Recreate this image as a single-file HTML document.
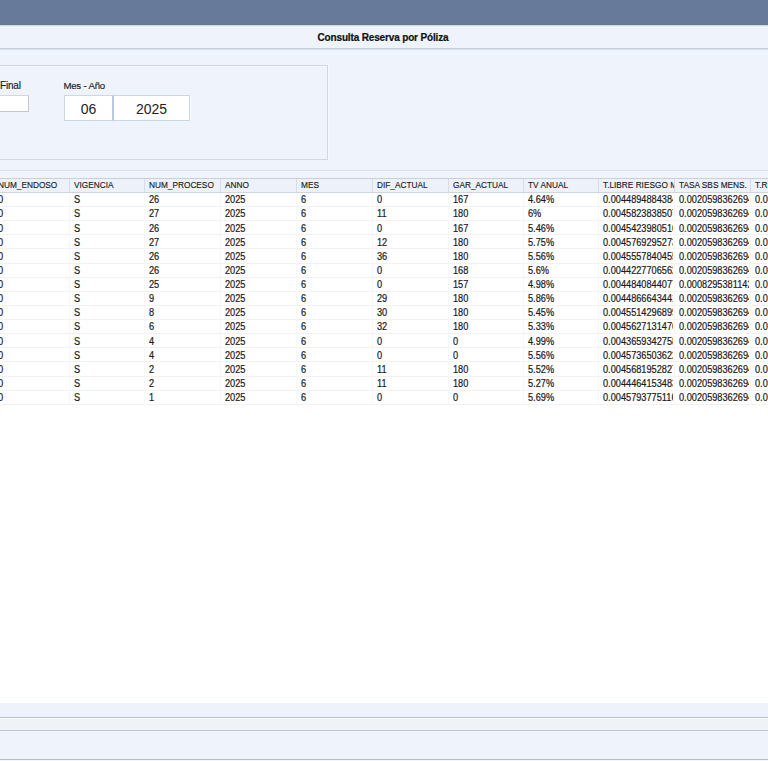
<!DOCTYPE html>
<html><head><meta charset="utf-8">
<style>
*{margin:0;padding:0;box-sizing:border-box}
html,body{width:768px;height:761px;overflow:hidden;background:#eff3fb;font-family:"Liberation Sans",sans-serif;color:#222;position:relative}
.abs{position:absolute}
#topbar{left:0;top:0;width:768px;height:25px;background:#687a99;border-bottom:1px solid #66778f}
#tb2{left:0;top:25px;width:768px;height:1px;background:#cfd7e2}
#tb3{left:0;top:26px;width:768px;height:1px;background:#e9eff7}
#titleband{left:0;top:27px;width:768px;height:21px;background:#eff3fb;border-top:1px solid #f3f7fd}
#title{left:0;top:27px;width:766px;height:21px;line-height:21px;text-align:center;font-weight:bold;font-size:10px;letter-spacing:-0.15px;color:#111;-webkit-text-stroke:0.2px #111}
#l48{left:0;top:48px;width:768px;height:1px;background:#c8d0db;box-shadow:0 1px 0 #dbe1ea}
#l49{left:0;top:50px;width:768px;height:3px;background:#eef4fd}
#l53{left:0;top:53px;width:768px;height:1px;background:#f4f7fc}
#panel{left:-60px;top:65px;width:388px;height:95px;border:1px solid #d2d8e2;box-shadow:inset 1px 1px 0 #f7f9fd, 1px 0 0 #f5f8fd}
.lbl{font-size:10px;color:#1a1a1a;letter-spacing:-0.2px;-webkit-text-stroke:0.15px #1a1a1a}
.inp{background:#fff;border:1px solid #cbd7e3}
.inpg{background:#fff;border:1px solid #d3d6da;border-right-color:#c3c7cc;border-bottom-color:#c3c7cc}
.val{font-size:14px;color:#222;text-align:center}
#l170{left:0;top:170px;width:768px;height:1px;background:#d9dfe7;box-shadow:0 1px 0 #f4f7fc}
#grid{left:0;top:178px;width:768px;height:227px;background:#fff}
.hdr{top:178px;height:15px;background:#edf2fa;border-top:1px solid #c9d0d9;border-bottom:1px solid #cfd5dd}
.hsep{width:1px;background:#d6dde8}
.htxt{font-size:9.3px;color:#1a1a1a;white-space:nowrap;overflow:hidden;transform-origin:0 0;transform:scaleX(0.89);-webkit-text-stroke:0.15px #1a1a1a}
.rsep{height:1px;background:#f3f1f2}
.csep{width:1px;background:#f7f7f8}
.cell{font-size:10px;color:#1a1a1a;white-space:nowrap;overflow:hidden;transform-origin:0 0;transform:scaleX(0.92);-webkit-text-stroke:0.2px #1a1a1a}
#white{left:0;top:405px;width:768px;height:298px;background:#fff}
#b1{left:0;top:703px;width:768px;height:14px;background:#eef2fb}
#b2{left:0;top:717px;width:768px;height:1px;background:#b9c0cb}
#b3{left:0;top:718px;width:768px;height:1px;background:#fbfcfe}
#b4{left:0;top:719px;width:768px;height:11px;background:#eff3f8}
#b5{left:0;top:730px;width:768px;height:1px;background:#c0c6cf}
#b6{left:0;top:731px;width:768px;height:28px;background:#eff3fb}
#b7{left:0;top:759px;width:768px;height:1px;background:#b3bac5}
#b8{left:0;top:760px;width:768px;height:1px;background:#f4f6fa}
</style></head><body>
<div id="topbar" class="abs"></div>
<div id="tb2" class="abs"></div>
<div id="tb3" class="abs"></div>
<div id="titleband" class="abs"></div>
<div id="title" class="abs">Consulta Reserva por Póliza</div>
<div id="l48" class="abs"></div>
<div id="l49" class="abs"></div>
<div id="l53" class="abs"></div>
<div id="panel" class="abs"></div>
<div class="abs lbl" style="left:0px;top:80px">Final</div>
<div class="abs inpg" style="left:-40px;top:95px;width:69px;height:17px"></div>
<div class="abs lbl" style="left:63.5px;top:79.5px;font-size:9.6px;letter-spacing:-0.3px;word-spacing:0.4px">Mes - Año</div>
<div class="abs inp val" style="left:64px;top:95px;width:49px;height:26px;line-height:26px;border-right-color:#b5cade">06</div>
<div class="abs inp val" style="left:113px;top:95px;width:77px;height:26px;line-height:26px;border-left-color:#b5cade;box-shadow:1px 0 0 #f8fbfe">2025</div>
<div id="l170" class="abs"></div>
<div id="grid" class="abs"></div>

<div class="abs hdr" style="left:0;width:768px"></div>
<div class="abs hsep" style="left:69px;top:179px;height:13px"></div>
<div class="abs htxt" style="left:-2.50px;top:180px;width:79.78px;height:11px;line-height:11px">NUM_ENDOSO</div>
<div class="abs hsep" style="left:144px;top:179px;height:13px"></div>
<div class="abs htxt" style="left:73.50px;top:180px;width:78.65px;height:11px;line-height:11px">VIGENCIA</div>
<div class="abs hsep" style="left:220px;top:179px;height:13px"></div>
<div class="abs htxt" style="left:148.50px;top:180px;width:79.78px;height:11px;line-height:11px">NUM_PROCESO</div>
<div class="abs hsep" style="left:296px;top:179px;height:13px"></div>
<div class="abs htxt" style="left:224.50px;top:180px;width:79.78px;height:11px;line-height:11px">ANNO</div>
<div class="abs hsep" style="left:372px;top:179px;height:13px"></div>
<div class="abs htxt" style="left:300.50px;top:180px;width:79.78px;height:11px;line-height:11px">MES</div>
<div class="abs hsep" style="left:448px;top:179px;height:13px"></div>
<div class="abs htxt" style="left:376.50px;top:180px;width:79.78px;height:11px;line-height:11px">DIF_ACTUAL</div>
<div class="abs hsep" style="left:523px;top:179px;height:13px"></div>
<div class="abs htxt" style="left:452.50px;top:180px;width:78.65px;height:11px;line-height:11px">GAR_ACTUAL</div>
<div class="abs hsep" style="left:598px;top:179px;height:13px"></div>
<div class="abs htxt" style="left:527.50px;top:180px;width:78.65px;height:11px;line-height:11px">TV ANUAL</div>
<div class="abs hsep" style="left:674px;top:179px;height:13px"></div>
<div class="abs htxt" style="left:602.50px;top:180px;width:79.78px;height:11px;line-height:11px">T.LIBRE RIESGO MENS.</div>
<div class="abs hsep" style="left:750px;top:179px;height:13px"></div>
<div class="abs htxt" style="left:678.50px;top:180px;width:79.78px;height:11px;line-height:11px">TASA SBS MENS.</div>
<div class="abs htxt" style="left:754.50px;top:180px;width:79.78px;height:11px;line-height:11px">T.RIESGO</div>
<div class="abs rsep" style="left:0;top:206.03px;width:768px"></div>
<div class="abs cell" style="left:-2.50px;top:194.30px;width:76.09px;height:12px;line-height:12px">0</div>
<div class="abs cell" style="left:73.50px;top:194.30px;width:75.00px;height:12px;line-height:12px">S</div>
<div class="abs cell" style="left:148.50px;top:194.30px;width:76.09px;height:12px;line-height:12px">26</div>
<div class="abs cell" style="left:224.50px;top:194.30px;width:76.09px;height:12px;line-height:12px">2025</div>
<div class="abs cell" style="left:300.50px;top:194.30px;width:76.09px;height:12px;line-height:12px">6</div>
<div class="abs cell" style="left:376.50px;top:194.30px;width:76.09px;height:12px;line-height:12px">0</div>
<div class="abs cell" style="left:452.50px;top:194.30px;width:75.00px;height:12px;line-height:12px">167</div>
<div class="abs cell" style="left:527.50px;top:194.30px;width:75.00px;height:12px;line-height:12px">4.64%</div>
<div class="abs cell" style="left:602.50px;top:194.30px;width:76.09px;height:12px;line-height:12px">0.0044894884384</div>
<div class="abs cell" style="left:678.50px;top:194.30px;width:76.09px;height:12px;line-height:12px">0.0020598362694</div>
<div class="abs cell" style="left:754.50px;top:194.30px;width:76.09px;height:12px;line-height:12px">0.01234</div>
<div class="abs rsep" style="left:0;top:220.16px;width:768px"></div>
<div class="abs cell" style="left:-2.50px;top:208.43px;width:76.09px;height:12px;line-height:12px">0</div>
<div class="abs cell" style="left:73.50px;top:208.43px;width:75.00px;height:12px;line-height:12px">S</div>
<div class="abs cell" style="left:148.50px;top:208.43px;width:76.09px;height:12px;line-height:12px">27</div>
<div class="abs cell" style="left:224.50px;top:208.43px;width:76.09px;height:12px;line-height:12px">2025</div>
<div class="abs cell" style="left:300.50px;top:208.43px;width:76.09px;height:12px;line-height:12px">6</div>
<div class="abs cell" style="left:376.50px;top:208.43px;width:76.09px;height:12px;line-height:12px">11</div>
<div class="abs cell" style="left:452.50px;top:208.43px;width:75.00px;height:12px;line-height:12px">180</div>
<div class="abs cell" style="left:527.50px;top:208.43px;width:75.00px;height:12px;line-height:12px">6%</div>
<div class="abs cell" style="left:602.50px;top:208.43px;width:76.09px;height:12px;line-height:12px">0.0045823838507</div>
<div class="abs cell" style="left:678.50px;top:208.43px;width:76.09px;height:12px;line-height:12px">0.0020598362694</div>
<div class="abs cell" style="left:754.50px;top:208.43px;width:76.09px;height:12px;line-height:12px">0.01234</div>
<div class="abs rsep" style="left:0;top:234.29px;width:768px"></div>
<div class="abs cell" style="left:-2.50px;top:222.56px;width:76.09px;height:12px;line-height:12px">0</div>
<div class="abs cell" style="left:73.50px;top:222.56px;width:75.00px;height:12px;line-height:12px">S</div>
<div class="abs cell" style="left:148.50px;top:222.56px;width:76.09px;height:12px;line-height:12px">26</div>
<div class="abs cell" style="left:224.50px;top:222.56px;width:76.09px;height:12px;line-height:12px">2025</div>
<div class="abs cell" style="left:300.50px;top:222.56px;width:76.09px;height:12px;line-height:12px">6</div>
<div class="abs cell" style="left:376.50px;top:222.56px;width:76.09px;height:12px;line-height:12px">0</div>
<div class="abs cell" style="left:452.50px;top:222.56px;width:75.00px;height:12px;line-height:12px">167</div>
<div class="abs cell" style="left:527.50px;top:222.56px;width:75.00px;height:12px;line-height:12px">5.46%</div>
<div class="abs cell" style="left:602.50px;top:222.56px;width:76.09px;height:12px;line-height:12px">0.0045423980516</div>
<div class="abs cell" style="left:678.50px;top:222.56px;width:76.09px;height:12px;line-height:12px">0.0020598362694</div>
<div class="abs cell" style="left:754.50px;top:222.56px;width:76.09px;height:12px;line-height:12px">0.01234</div>
<div class="abs rsep" style="left:0;top:248.42px;width:768px"></div>
<div class="abs cell" style="left:-2.50px;top:236.69px;width:76.09px;height:12px;line-height:12px">0</div>
<div class="abs cell" style="left:73.50px;top:236.69px;width:75.00px;height:12px;line-height:12px">S</div>
<div class="abs cell" style="left:148.50px;top:236.69px;width:76.09px;height:12px;line-height:12px">27</div>
<div class="abs cell" style="left:224.50px;top:236.69px;width:76.09px;height:12px;line-height:12px">2025</div>
<div class="abs cell" style="left:300.50px;top:236.69px;width:76.09px;height:12px;line-height:12px">6</div>
<div class="abs cell" style="left:376.50px;top:236.69px;width:76.09px;height:12px;line-height:12px">12</div>
<div class="abs cell" style="left:452.50px;top:236.69px;width:75.00px;height:12px;line-height:12px">180</div>
<div class="abs cell" style="left:527.50px;top:236.69px;width:75.00px;height:12px;line-height:12px">5.75%</div>
<div class="abs cell" style="left:602.50px;top:236.69px;width:76.09px;height:12px;line-height:12px">0.0045769295273</div>
<div class="abs cell" style="left:678.50px;top:236.69px;width:76.09px;height:12px;line-height:12px">0.0020598362694</div>
<div class="abs cell" style="left:754.50px;top:236.69px;width:76.09px;height:12px;line-height:12px">0.01234</div>
<div class="abs rsep" style="left:0;top:262.55px;width:768px"></div>
<div class="abs cell" style="left:-2.50px;top:250.82px;width:76.09px;height:12px;line-height:12px">0</div>
<div class="abs cell" style="left:73.50px;top:250.82px;width:75.00px;height:12px;line-height:12px">S</div>
<div class="abs cell" style="left:148.50px;top:250.82px;width:76.09px;height:12px;line-height:12px">26</div>
<div class="abs cell" style="left:224.50px;top:250.82px;width:76.09px;height:12px;line-height:12px">2025</div>
<div class="abs cell" style="left:300.50px;top:250.82px;width:76.09px;height:12px;line-height:12px">6</div>
<div class="abs cell" style="left:376.50px;top:250.82px;width:76.09px;height:12px;line-height:12px">36</div>
<div class="abs cell" style="left:452.50px;top:250.82px;width:75.00px;height:12px;line-height:12px">180</div>
<div class="abs cell" style="left:527.50px;top:250.82px;width:75.00px;height:12px;line-height:12px">5.56%</div>
<div class="abs cell" style="left:602.50px;top:250.82px;width:76.09px;height:12px;line-height:12px">0.0045557840455</div>
<div class="abs cell" style="left:678.50px;top:250.82px;width:76.09px;height:12px;line-height:12px">0.0020598362694</div>
<div class="abs cell" style="left:754.50px;top:250.82px;width:76.09px;height:12px;line-height:12px">0.01234</div>
<div class="abs rsep" style="left:0;top:276.68px;width:768px"></div>
<div class="abs cell" style="left:-2.50px;top:264.95px;width:76.09px;height:12px;line-height:12px">0</div>
<div class="abs cell" style="left:73.50px;top:264.95px;width:75.00px;height:12px;line-height:12px">S</div>
<div class="abs cell" style="left:148.50px;top:264.95px;width:76.09px;height:12px;line-height:12px">26</div>
<div class="abs cell" style="left:224.50px;top:264.95px;width:76.09px;height:12px;line-height:12px">2025</div>
<div class="abs cell" style="left:300.50px;top:264.95px;width:76.09px;height:12px;line-height:12px">6</div>
<div class="abs cell" style="left:376.50px;top:264.95px;width:76.09px;height:12px;line-height:12px">0</div>
<div class="abs cell" style="left:452.50px;top:264.95px;width:75.00px;height:12px;line-height:12px">168</div>
<div class="abs cell" style="left:527.50px;top:264.95px;width:75.00px;height:12px;line-height:12px">5.6%</div>
<div class="abs cell" style="left:602.50px;top:264.95px;width:76.09px;height:12px;line-height:12px">0.0044227706562</div>
<div class="abs cell" style="left:678.50px;top:264.95px;width:76.09px;height:12px;line-height:12px">0.0020598362694</div>
<div class="abs cell" style="left:754.50px;top:264.95px;width:76.09px;height:12px;line-height:12px">0.01234</div>
<div class="abs rsep" style="left:0;top:290.81px;width:768px"></div>
<div class="abs cell" style="left:-2.50px;top:279.08px;width:76.09px;height:12px;line-height:12px">0</div>
<div class="abs cell" style="left:73.50px;top:279.08px;width:75.00px;height:12px;line-height:12px">S</div>
<div class="abs cell" style="left:148.50px;top:279.08px;width:76.09px;height:12px;line-height:12px">25</div>
<div class="abs cell" style="left:224.50px;top:279.08px;width:76.09px;height:12px;line-height:12px">2025</div>
<div class="abs cell" style="left:300.50px;top:279.08px;width:76.09px;height:12px;line-height:12px">6</div>
<div class="abs cell" style="left:376.50px;top:279.08px;width:76.09px;height:12px;line-height:12px">0</div>
<div class="abs cell" style="left:452.50px;top:279.08px;width:75.00px;height:12px;line-height:12px">157</div>
<div class="abs cell" style="left:527.50px;top:279.08px;width:75.00px;height:12px;line-height:12px">4.98%</div>
<div class="abs cell" style="left:602.50px;top:279.08px;width:76.09px;height:12px;line-height:12px">0.0044840844077</div>
<div class="abs cell" style="left:678.50px;top:279.08px;width:76.09px;height:12px;line-height:12px">0.0008295381142</div>
<div class="abs cell" style="left:754.50px;top:279.08px;width:76.09px;height:12px;line-height:12px">0.01234</div>
<div class="abs rsep" style="left:0;top:304.94px;width:768px"></div>
<div class="abs cell" style="left:-2.50px;top:293.21px;width:76.09px;height:12px;line-height:12px">0</div>
<div class="abs cell" style="left:73.50px;top:293.21px;width:75.00px;height:12px;line-height:12px">S</div>
<div class="abs cell" style="left:148.50px;top:293.21px;width:76.09px;height:12px;line-height:12px">9</div>
<div class="abs cell" style="left:224.50px;top:293.21px;width:76.09px;height:12px;line-height:12px">2025</div>
<div class="abs cell" style="left:300.50px;top:293.21px;width:76.09px;height:12px;line-height:12px">6</div>
<div class="abs cell" style="left:376.50px;top:293.21px;width:76.09px;height:12px;line-height:12px">29</div>
<div class="abs cell" style="left:452.50px;top:293.21px;width:75.00px;height:12px;line-height:12px">180</div>
<div class="abs cell" style="left:527.50px;top:293.21px;width:75.00px;height:12px;line-height:12px">5.86%</div>
<div class="abs cell" style="left:602.50px;top:293.21px;width:76.09px;height:12px;line-height:12px">0.0044866643441</div>
<div class="abs cell" style="left:678.50px;top:293.21px;width:76.09px;height:12px;line-height:12px">0.0020598362694</div>
<div class="abs cell" style="left:754.50px;top:293.21px;width:76.09px;height:12px;line-height:12px">0.01234</div>
<div class="abs rsep" style="left:0;top:319.07px;width:768px"></div>
<div class="abs cell" style="left:-2.50px;top:307.34px;width:76.09px;height:12px;line-height:12px">0</div>
<div class="abs cell" style="left:73.50px;top:307.34px;width:75.00px;height:12px;line-height:12px">S</div>
<div class="abs cell" style="left:148.50px;top:307.34px;width:76.09px;height:12px;line-height:12px">8</div>
<div class="abs cell" style="left:224.50px;top:307.34px;width:76.09px;height:12px;line-height:12px">2025</div>
<div class="abs cell" style="left:300.50px;top:307.34px;width:76.09px;height:12px;line-height:12px">6</div>
<div class="abs cell" style="left:376.50px;top:307.34px;width:76.09px;height:12px;line-height:12px">30</div>
<div class="abs cell" style="left:452.50px;top:307.34px;width:75.00px;height:12px;line-height:12px">180</div>
<div class="abs cell" style="left:527.50px;top:307.34px;width:75.00px;height:12px;line-height:12px">5.45%</div>
<div class="abs cell" style="left:602.50px;top:307.34px;width:76.09px;height:12px;line-height:12px">0.0045514296899</div>
<div class="abs cell" style="left:678.50px;top:307.34px;width:76.09px;height:12px;line-height:12px">0.0020598362694</div>
<div class="abs cell" style="left:754.50px;top:307.34px;width:76.09px;height:12px;line-height:12px">0.01234</div>
<div class="abs rsep" style="left:0;top:333.20px;width:768px"></div>
<div class="abs cell" style="left:-2.50px;top:321.47px;width:76.09px;height:12px;line-height:12px">0</div>
<div class="abs cell" style="left:73.50px;top:321.47px;width:75.00px;height:12px;line-height:12px">S</div>
<div class="abs cell" style="left:148.50px;top:321.47px;width:76.09px;height:12px;line-height:12px">6</div>
<div class="abs cell" style="left:224.50px;top:321.47px;width:76.09px;height:12px;line-height:12px">2025</div>
<div class="abs cell" style="left:300.50px;top:321.47px;width:76.09px;height:12px;line-height:12px">6</div>
<div class="abs cell" style="left:376.50px;top:321.47px;width:76.09px;height:12px;line-height:12px">32</div>
<div class="abs cell" style="left:452.50px;top:321.47px;width:75.00px;height:12px;line-height:12px">180</div>
<div class="abs cell" style="left:527.50px;top:321.47px;width:75.00px;height:12px;line-height:12px">5.33%</div>
<div class="abs cell" style="left:602.50px;top:321.47px;width:76.09px;height:12px;line-height:12px">0.0045627131476</div>
<div class="abs cell" style="left:678.50px;top:321.47px;width:76.09px;height:12px;line-height:12px">0.0020598362694</div>
<div class="abs cell" style="left:754.50px;top:321.47px;width:76.09px;height:12px;line-height:12px">0.01234</div>
<div class="abs rsep" style="left:0;top:347.33px;width:768px"></div>
<div class="abs cell" style="left:-2.50px;top:335.60px;width:76.09px;height:12px;line-height:12px">0</div>
<div class="abs cell" style="left:73.50px;top:335.60px;width:75.00px;height:12px;line-height:12px">S</div>
<div class="abs cell" style="left:148.50px;top:335.60px;width:76.09px;height:12px;line-height:12px">4</div>
<div class="abs cell" style="left:224.50px;top:335.60px;width:76.09px;height:12px;line-height:12px">2025</div>
<div class="abs cell" style="left:300.50px;top:335.60px;width:76.09px;height:12px;line-height:12px">6</div>
<div class="abs cell" style="left:376.50px;top:335.60px;width:76.09px;height:12px;line-height:12px">0</div>
<div class="abs cell" style="left:452.50px;top:335.60px;width:75.00px;height:12px;line-height:12px">0</div>
<div class="abs cell" style="left:527.50px;top:335.60px;width:75.00px;height:12px;line-height:12px">4.99%</div>
<div class="abs cell" style="left:602.50px;top:335.60px;width:76.09px;height:12px;line-height:12px">0.0043659342758</div>
<div class="abs cell" style="left:678.50px;top:335.60px;width:76.09px;height:12px;line-height:12px">0.0020598362694</div>
<div class="abs cell" style="left:754.50px;top:335.60px;width:76.09px;height:12px;line-height:12px">0.01234</div>
<div class="abs rsep" style="left:0;top:361.46px;width:768px"></div>
<div class="abs cell" style="left:-2.50px;top:349.73px;width:76.09px;height:12px;line-height:12px">0</div>
<div class="abs cell" style="left:73.50px;top:349.73px;width:75.00px;height:12px;line-height:12px">S</div>
<div class="abs cell" style="left:148.50px;top:349.73px;width:76.09px;height:12px;line-height:12px">4</div>
<div class="abs cell" style="left:224.50px;top:349.73px;width:76.09px;height:12px;line-height:12px">2025</div>
<div class="abs cell" style="left:300.50px;top:349.73px;width:76.09px;height:12px;line-height:12px">6</div>
<div class="abs cell" style="left:376.50px;top:349.73px;width:76.09px;height:12px;line-height:12px">0</div>
<div class="abs cell" style="left:452.50px;top:349.73px;width:75.00px;height:12px;line-height:12px">0</div>
<div class="abs cell" style="left:527.50px;top:349.73px;width:75.00px;height:12px;line-height:12px">5.56%</div>
<div class="abs cell" style="left:602.50px;top:349.73px;width:76.09px;height:12px;line-height:12px">0.0045736503622</div>
<div class="abs cell" style="left:678.50px;top:349.73px;width:76.09px;height:12px;line-height:12px">0.0020598362694</div>
<div class="abs cell" style="left:754.50px;top:349.73px;width:76.09px;height:12px;line-height:12px">0.01234</div>
<div class="abs rsep" style="left:0;top:375.59px;width:768px"></div>
<div class="abs cell" style="left:-2.50px;top:363.86px;width:76.09px;height:12px;line-height:12px">0</div>
<div class="abs cell" style="left:73.50px;top:363.86px;width:75.00px;height:12px;line-height:12px">S</div>
<div class="abs cell" style="left:148.50px;top:363.86px;width:76.09px;height:12px;line-height:12px">2</div>
<div class="abs cell" style="left:224.50px;top:363.86px;width:76.09px;height:12px;line-height:12px">2025</div>
<div class="abs cell" style="left:300.50px;top:363.86px;width:76.09px;height:12px;line-height:12px">6</div>
<div class="abs cell" style="left:376.50px;top:363.86px;width:76.09px;height:12px;line-height:12px">11</div>
<div class="abs cell" style="left:452.50px;top:363.86px;width:75.00px;height:12px;line-height:12px">180</div>
<div class="abs cell" style="left:527.50px;top:363.86px;width:75.00px;height:12px;line-height:12px">5.52%</div>
<div class="abs cell" style="left:602.50px;top:363.86px;width:76.09px;height:12px;line-height:12px">0.0045681952827</div>
<div class="abs cell" style="left:678.50px;top:363.86px;width:76.09px;height:12px;line-height:12px">0.0020598362694</div>
<div class="abs cell" style="left:754.50px;top:363.86px;width:76.09px;height:12px;line-height:12px">0.01234</div>
<div class="abs rsep" style="left:0;top:389.72px;width:768px"></div>
<div class="abs cell" style="left:-2.50px;top:377.99px;width:76.09px;height:12px;line-height:12px">0</div>
<div class="abs cell" style="left:73.50px;top:377.99px;width:75.00px;height:12px;line-height:12px">S</div>
<div class="abs cell" style="left:148.50px;top:377.99px;width:76.09px;height:12px;line-height:12px">2</div>
<div class="abs cell" style="left:224.50px;top:377.99px;width:76.09px;height:12px;line-height:12px">2025</div>
<div class="abs cell" style="left:300.50px;top:377.99px;width:76.09px;height:12px;line-height:12px">6</div>
<div class="abs cell" style="left:376.50px;top:377.99px;width:76.09px;height:12px;line-height:12px">11</div>
<div class="abs cell" style="left:452.50px;top:377.99px;width:75.00px;height:12px;line-height:12px">180</div>
<div class="abs cell" style="left:527.50px;top:377.99px;width:75.00px;height:12px;line-height:12px">5.27%</div>
<div class="abs cell" style="left:602.50px;top:377.99px;width:76.09px;height:12px;line-height:12px">0.0044464153483</div>
<div class="abs cell" style="left:678.50px;top:377.99px;width:76.09px;height:12px;line-height:12px">0.0020598362694</div>
<div class="abs cell" style="left:754.50px;top:377.99px;width:76.09px;height:12px;line-height:12px">0.01234</div>
<div class="abs rsep" style="left:0;top:403.85px;width:768px"></div>
<div class="abs cell" style="left:-2.50px;top:392.12px;width:76.09px;height:12px;line-height:12px">0</div>
<div class="abs cell" style="left:73.50px;top:392.12px;width:75.00px;height:12px;line-height:12px">S</div>
<div class="abs cell" style="left:148.50px;top:392.12px;width:76.09px;height:12px;line-height:12px">1</div>
<div class="abs cell" style="left:224.50px;top:392.12px;width:76.09px;height:12px;line-height:12px">2025</div>
<div class="abs cell" style="left:300.50px;top:392.12px;width:76.09px;height:12px;line-height:12px">6</div>
<div class="abs cell" style="left:376.50px;top:392.12px;width:76.09px;height:12px;line-height:12px">0</div>
<div class="abs cell" style="left:452.50px;top:392.12px;width:75.00px;height:12px;line-height:12px">0</div>
<div class="abs cell" style="left:527.50px;top:392.12px;width:75.00px;height:12px;line-height:12px">5.69%</div>
<div class="abs cell" style="left:602.50px;top:392.12px;width:76.09px;height:12px;line-height:12px">0.0045793775116</div>
<div class="abs cell" style="left:678.50px;top:392.12px;width:76.09px;height:12px;line-height:12px">0.0020598362694</div>
<div class="abs cell" style="left:754.50px;top:392.12px;width:76.09px;height:12px;line-height:12px">0.01234</div>
<div class="abs csep" style="left:69px;top:193px;height:211.95px"></div>
<div class="abs csep" style="left:144px;top:193px;height:211.95px"></div>
<div class="abs csep" style="left:220px;top:193px;height:211.95px"></div>
<div class="abs csep" style="left:296px;top:193px;height:211.95px"></div>
<div class="abs csep" style="left:372px;top:193px;height:211.95px"></div>
<div class="abs csep" style="left:448px;top:193px;height:211.95px"></div>
<div class="abs csep" style="left:523px;top:193px;height:211.95px"></div>
<div class="abs csep" style="left:598px;top:193px;height:211.95px"></div>
<div class="abs csep" style="left:674px;top:193px;height:211.95px"></div>
<div class="abs csep" style="left:750px;top:193px;height:211.95px"></div>
<div id="white" class="abs"></div><div class="abs" style="left:0;top:697px;width:768px;height:1px;background:#f9fafc"></div>
<div id="b1" class="abs"></div><div id="b2" class="abs"></div><div id="b3" class="abs"></div><div id="b4" class="abs"></div>
<div id="b5" class="abs"></div><div id="b6" class="abs"></div><div id="b7" class="abs"></div><div id="b8" class="abs"></div>
</body></html>
